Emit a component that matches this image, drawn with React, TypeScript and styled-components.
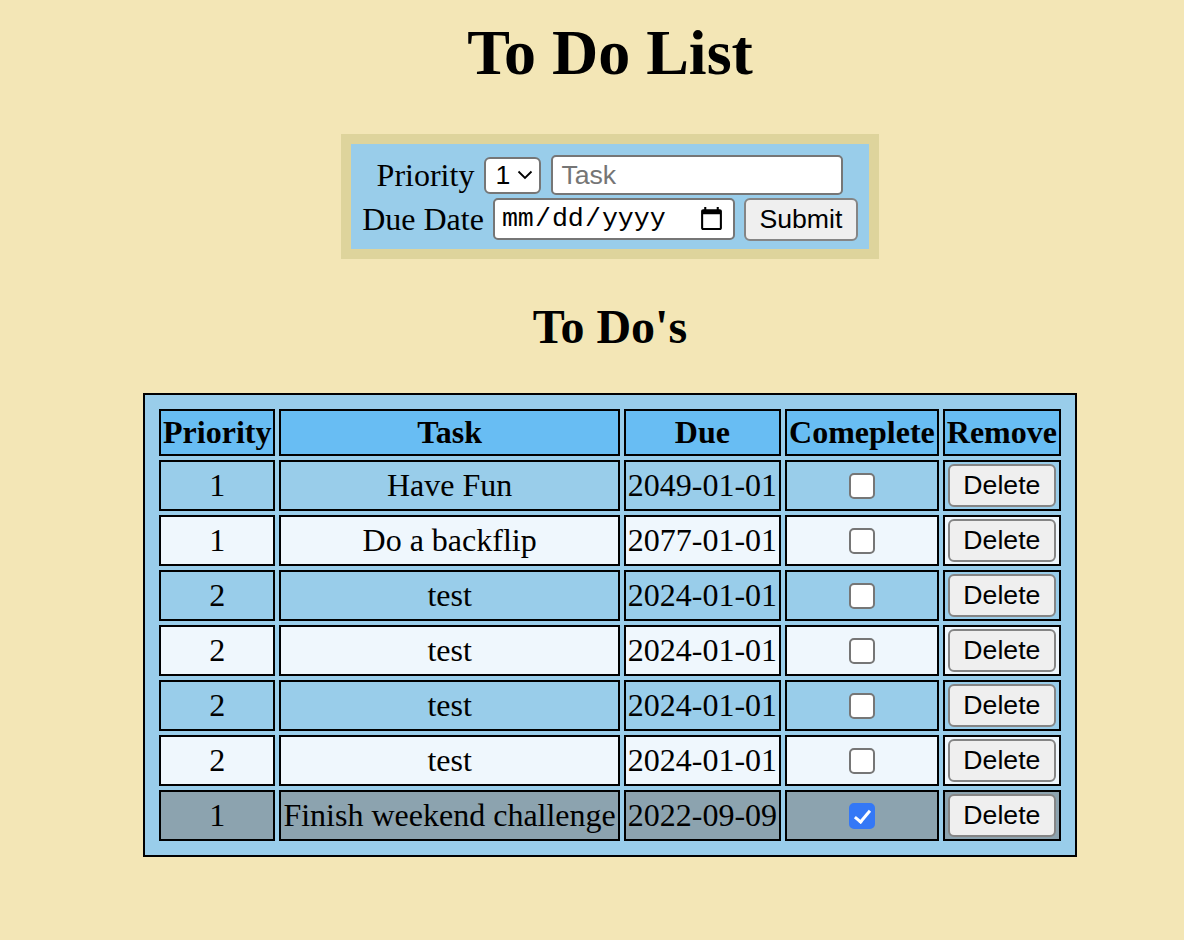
import React, { useState } from "react";
import styled, { createGlobalStyle } from "styled-components";

const GlobalStyle = createGlobalStyle`
  html, body {
    margin: 0;
    background: #f3e6b6;
  }
  body {
    font-family: "Liberation Serif", "Times New Roman", serif;
    font-size: 32px;
    color: #000;
  }
`;

const Page = styled.div`
  display: flex;
  flex-direction: column;
  align-items: center;
  padding: 16px 0 0 36px;
`;

const Title = styled.h1`
  margin: 0 0 44px;
  font-size: 64px;
  font-weight: bold;
  line-height: normal;
`;

const SubTitle = styled.h2`
  margin: 40px 0 39px;
  font-size: 48px;
  font-weight: bold;
  line-height: normal;
`;

const Form = styled.form`
  display: flex;
  flex-direction: column;
  align-items: center;
  border: 10px solid #ded49c;
  background: #99cdea;
  padding: 9px 11px 8px;
`;

const FormRow = styled.div<{ $gap: number }>`
  height: 44px;
  display: flex;
  align-items: center;
  justify-content: center;
  gap: ${(p) => p.$gap}px;
`;

const Label = styled.label`
  font-size: 32px;
  line-height: 1;
`;

const SelectWrap = styled.span`
  position: relative;
  display: inline-flex;
`;

const Select = styled.select`
  appearance: none;
  width: 57px;
  height: 37px;
  border: 2px solid #767676;
  border-radius: 6px;
  background: #fff;
  color: #000;
  padding: 0 0 0 9px;
  font-family: "Liberation Sans", Arial, sans-serif;
  font-size: 26.67px;
  outline: none;
`;

const Chevron = styled.svg`
  position: absolute;
  right: 8px;
  top: 50%;
  transform: translateY(-50%);
  pointer-events: none;
`;

const TextInput = styled.input`
  box-sizing: border-box;
  width: 292px;
  height: 40px;
  border: 2px solid #767676;
  border-radius: 5px;
  background: #fff;
  padding: 0 8px;
  font-family: "Liberation Sans", Arial, sans-serif;
  font-size: 26.67px;
  outline: none;
  &::placeholder {
    color: #757575;
  }
`;

const DateInput = styled.input`
  box-sizing: border-box;
  width: 242px;
  height: 42px;
  border: 2px solid #767676;
  border-radius: 5px;
  background: #fff;
  padding: 0 6px;
  font-family: "Liberation Mono", "Courier New", monospace;
  font-size: 26.67px;
  color: #000;
  outline: none;
`;

const Button = styled.button`
  box-sizing: border-box;
  height: 43px;
  padding: 0 13.5px;
  border: 2px solid #858585;
  border-radius: 6px;
  background: #efefef;
  color: #000;
  font-family: "Liberation Sans", Arial, sans-serif;
  font-size: 26.67px;
  cursor: pointer;
`;

const DeleteButton = styled(Button)`
  display: block;
  margin: 0 auto;
`;

const Table = styled.table`
  border: 2px solid #000;
  background: #99cdea;
  padding: 10px;
  border-collapse: separate;
  border-spacing: 4px;
`;

const Th = styled.th`
  border: 2px solid #000;
  padding: 3px 2px;
  background: #68bdf3;
  font-weight: bold;
  text-align: center;
`;

const Td = styled.td<{ $tone: string }>`
  border: 2px solid #000;
  padding: 2px;
  background: ${(p) => p.$tone};
  text-align: center;
  white-space: nowrap;
`;

const Check = styled.input`
  appearance: none;
  position: relative;
  display: block;
  box-sizing: border-box;
  margin: 0 auto;
  width: 26px;
  height: 26px;
  border: 2px solid #767676;
  border-radius: 5px;
  background: #fff;
  cursor: pointer;
  &:checked {
    background: #3478f6;
    border-color: #3478f6;
  }
  &:checked::after {
    content: "";
    position: absolute;
    left: 7px;
    top: 2px;
    width: 6px;
    height: 13px;
    border: solid #fff;
    border-width: 0 3px 3px 0;
    transform: rotate(40deg);
  }
`;

type Todo = {
  id: number;
  priority: number;
  task: string;
  due: string;
  done: boolean;
};

const START: Todo[] = [
  { id: 1, priority: 1, task: "Have Fun", due: "2049-01-01", done: false },
  { id: 2, priority: 1, task: "Do a backflip", due: "2077-01-01", done: false },
  { id: 3, priority: 2, task: "test", due: "2024-01-01", done: false },
  { id: 4, priority: 2, task: "test", due: "2024-01-01", done: false },
  { id: 5, priority: 2, task: "test", due: "2024-01-01", done: false },
  { id: 6, priority: 2, task: "test", due: "2024-01-01", done: false },
  { id: 7, priority: 1, task: "Finish weekend challenge", due: "2022-09-09", done: true },
];

const App = () => {
  const [todos, setTodos] = useState<Todo[]>(START);

  const toggle = (id: number) =>
    setTodos((list) => list.map((t) => (t.id === id ? { ...t, done: !t.done } : t)));

  const remove = (id: number) => setTodos((list) => list.filter((t) => t.id !== id));

  return (
    <Page>
      <GlobalStyle />
      <Title>To Do List</Title>
      <Form onSubmit={(e) => e.preventDefault()}>
        <FormRow $gap={10}>
          <Label>Priority</Label>
          <SelectWrap>
            <Select defaultValue="1">
              <option value="1">1</option>
              <option value="2">2</option>
              <option value="3">3</option>
            </Select>
            <Chevron width="16" height="10" viewBox="0 0 16 10">
              <path d="M1.5 1.5 L8 8 L14.5 1.5" fill="none" stroke="#000" strokeWidth="1.8" />
            </Chevron>
          </SelectWrap>
          <TextInput type="text" placeholder="Task" />
        </FormRow>
        <FormRow $gap={9}>
          <Label>Due Date</Label>
          <DateInput type="date" />
          <Button type="submit">Submit</Button>
        </FormRow>
      </Form>

      <SubTitle>To Do's</SubTitle>
      <Table>
        <thead>
          <tr>
            <Th>Priority</Th>
            <Th>Task</Th>
            <Th>Due</Th>
            <Th>Comeplete</Th>
            <Th>Remove</Th>
          </tr>
        </thead>
        <tbody>
          {todos.map((t, i) => {
            // completed rows go grey, others alternate blue / white
            const tone = t.done ? "#8ca3af" : i % 2 === 0 ? "#99cdea" : "#eff7fd";
            return (
              <tr key={t.id}>
                <Td $tone={tone}>{t.priority}</Td>
                <Td $tone={tone}>{t.task}</Td>
                <Td $tone={tone}>{t.due}</Td>
                <Td $tone={tone}>
                  <Check type="checkbox" checked={t.done} onChange={() => toggle(t.id)} />
                </Td>
                <Td $tone={tone}>
                  <DeleteButton onClick={() => remove(t.id)}>Delete</DeleteButton>
                </Td>
              </tr>
            );
          })}
        </tbody>
      </Table>
    </Page>
  );
};

export default App;
